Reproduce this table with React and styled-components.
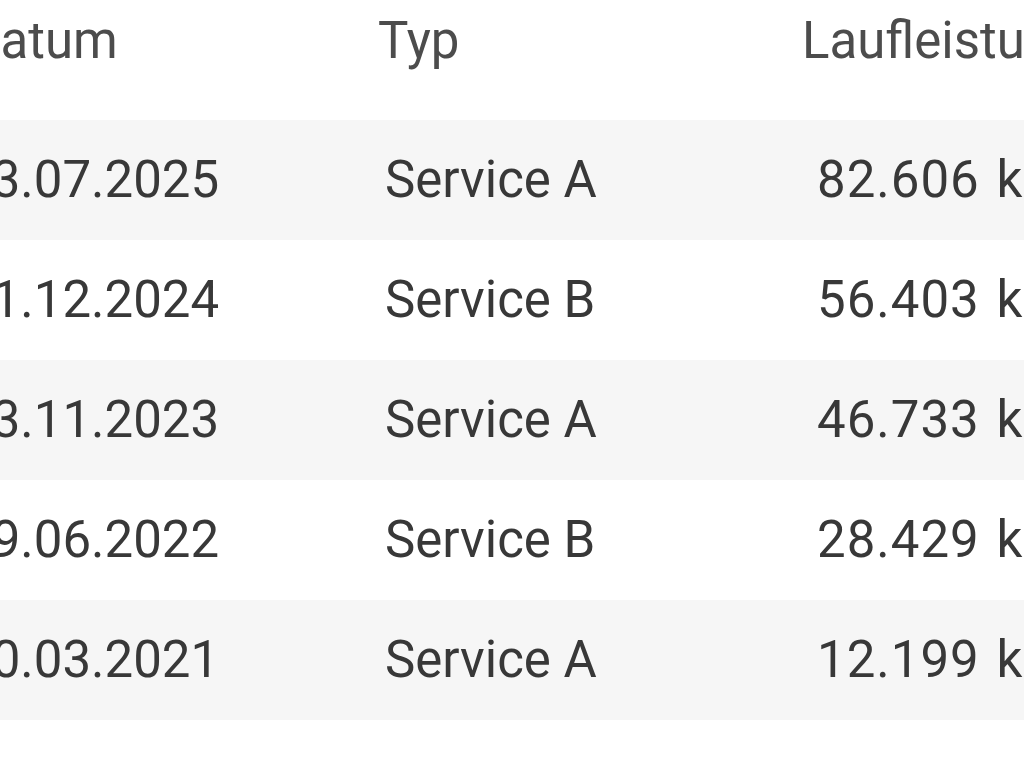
import React from 'react';
import styled, { createGlobalStyle } from 'styled-components';

const GlobalStyle = createGlobalStyle`
html, body {
    margin: 0;
    padding: 0;
    background: #ffffff;
    overflow: hidden;
}
body {
    font-family: Roboto, "Liberation Sans", sans-serif;
}
`;

const Wrap = styled.div`
width: 1024px;
height: 768px;
overflow: hidden;
`;

const Table = styled.table`
border-collapse: collapse;
table-layout: fixed;
width: 1300px;
margin-left: -40px;
font-size: 51px;
line-height: 52px;
`;

const HeadCell = styled.th`
height: 120px;
padding: 15px 0 0 ${p => p.$indent}px;
box-sizing: border-box;
vertical-align: top;
text-align: left;
font-weight: 400;
color: #4c4c4c;
white-space: nowrap;
`;

const Row = styled.tr`
background: ${p => p.$striped ? '#f6f6f6' : '#ffffff'};
`;

const Cell = styled.td`
height: 120px;
padding: 0 0 0 ${p => p.$indent}px;
box-sizing: border-box;
vertical-align: middle;
color: #383838;
white-space: nowrap;
letter-spacing: ${p => p.$unit ? '1px' : 'normal'};
word-spacing: ${p => p.$unit ? '3px' : 'normal'};
`;

const columns = [
    {key: 'date', label: 'Datum', width: 418, headIndent: 7, cellIndent: 3},
    {key: 'type', label: 'Typ', width: 424, headIndent: 0, cellIndent: 7},
    {key: 'km', label: 'Laufleistung', width: 458, headIndent: 0, cellIndent: 15, unit: true},
];

const services = [
    {date: '23.07.2025', type: 'Service A', km: '82.606 km'},
    {date: '11.12.2024', type: 'Service B', km: '56.403 km'},
    {date: '13.11.2023', type: 'Service A', km: '46.733 km'},
    {date: '29.06.2022', type: 'Service B', km: '28.429 km'},
    {date: '10.03.2021', type: 'Service A', km: '12.199 km'},
];

export default function App() {
    return (
        <Wrap>
            <GlobalStyle />
            <Table>
                <colgroup>
                    {columns.map(c => <col key={c.key} style={{width: c.width}} />)}
                </colgroup>
                <thead>
                    <tr>
                        {columns.map(c => (
                            <HeadCell key={c.key} $indent={c.headIndent}>{c.label}</HeadCell>
                        ))}
                    </tr>
                </thead>
                <tbody>
                    {services.map((s, i) => (
                        <Row key={`service-${i}`} $striped={i % 2 === 0}>
                            {columns.map(c => (
                                <Cell key={c.key} $indent={c.cellIndent} $unit={c.unit}>{s[c.key]}</Cell>
                            ))}
                        </Row>
                    ))}
                </tbody>
            </Table>
        </Wrap>
    );
}
